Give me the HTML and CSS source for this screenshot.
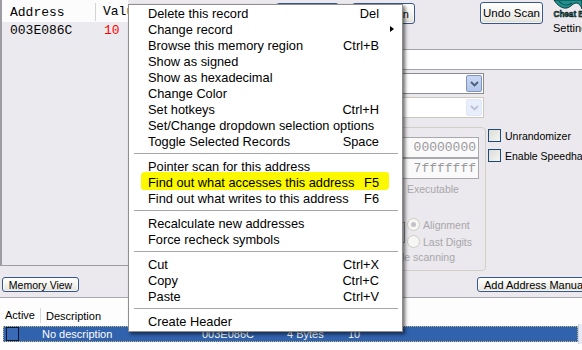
FILE: index.html
```html
<!DOCTYPE html>
<html>
<head>
<meta charset="utf-8">
<link rel="stylesheet" href="styles.css">
</head>
<body>
<div class="screen">
  <div class="top">
    <div class="addrlist">
      <div class="al-head"><span class="c-addr">Address</span><span class="c-val">Value</span></div>
      <div class="al-row"><span class="c-addr">003E086C</span><span class="c-val red">10</span></div>
    </div>
    <div class="controls">
      <div class="scanbar">
        <button class="btn scan1">First Scan</button>
        <button class="btn scan2">Next Scan</button>
        <button class="btn undo">Undo Scan</button>
        <div class="logo">
          <svg width="29" height="18" viewBox="0 0 29 18">
            <path d="M1 0 C4 5 9 9 14 8 C18 7 20 3 23 3 C26 3 28 6 29 9 L29 0 Z" fill="#1f9090" stroke="#062f2f" stroke-width="0.9"/>
            <path d="M6 1 C10 6 15 6 19 3" fill="none" stroke="#0b4d4d" stroke-width="1.1"/>
            <text x="0.5" y="17" font-family="Liberation Sans" font-size="8.5" font-weight="bold" fill="#177a7a" stroke="#000" stroke-width="0.5" textLength="52" lengthAdjust="spacingAndGlyphs">Cheat Engine</text>
          </svg>
          <span class="settings">Settings</span>
        </div>
      </div>
      <div class="valuebox"></div>
      <div class="combo"><span class="combo-btn"><svg width="9" height="6" viewBox="0 0 9 6"><path d="M1 1 L4.5 4.5 L8 1" fill="none" stroke="#4a5d80" stroke-width="1.8"/></svg></span></div>
      <div class="combo off"><span class="combo-btn"><svg width="9" height="6" viewBox="0 0 9 6"><path d="M1 1 L4.5 4.5 L8 1" fill="none" stroke="#b9c4d6" stroke-width="1.8"/></svg></span></div>
      <div class="lower">
        <div class="group">
          <div class="gb-input">00000000</div>
          <div class="gb-input second">7fffffff</div>
          <div class="gb-exec"><span class="chk dim"></span><span class="dimtext">Executable</span></div>
          <div class="gb-fast">
            <div class="fast-left"><span class="fast-edit"></span></div>
            <div class="radios">
              <div class="radio-row"><span class="radio on"></span><span class="dimtext">Alignment</span></div>
              <div class="radio-row"><span class="radio"></span><span class="dimtext">Last Digits</span></div>
            </div>
          </div>
          <div class="gb-pause dimtext">Pause the game while scanning</div>
        </div>
        <div class="checks">
          <div class="check-row"><span class="chk"></span><span>Unrandomizer</span></div>
          <div class="check-row"><span class="chk"></span><span>Enable Speedhack</span></div>
        </div>
      </div>
    </div>
  </div>
  <div class="midbar">
    <button class="btn memview">Memory View</button>
    <button class="btn addman">Add Address Manually</button>
  </div>
  <div class="table">
    <div class="t-head"><span class="h-active">Active</span><span class="h-desc">Description</span></div>
    <div class="t-body">
      <div class="t-row">
        <span class="row-chk"></span>
        <span class="r-desc">No description</span>
        <span class="r-addr">003E086C</span>
        <span class="r-type">4 Bytes</span>
        <span class="r-val">10</span>
      </div>
      <div class="vscroll"></div>
    </div>
  </div>

  <div class="menu">
    <div class="mi"><span>Delete this record</span><span class="sc">Del</span></div>
    <div class="mi"><span>Change record</span><span class="arrow"></span></div>
    <div class="mi"><span>Browse this memory region</span><span class="sc">Ctrl+B</span></div>
    <div class="mi"><span>Show as signed</span></div>
    <div class="mi"><span>Show as hexadecimal</span></div>
    <div class="mi"><span>Change Color</span></div>
    <div class="mi"><span>Set hotkeys</span><span class="sc">Ctrl+H</span></div>
    <div class="mi"><span>Set/Change dropdown selection options</span></div>
    <div class="mi"><span>Toggle Selected Records</span><span class="sc">Space</span></div>
    <div class="sep"></div>
    <div class="mi"><span>Pointer scan for this address</span></div>
    <div class="mi hl"><span>Find out what accesses this address</span><span class="sc">F5</span></div>
    <div class="mi"><span>Find out what writes to this address</span><span class="sc">F6</span></div>
    <div class="sep"></div>
    <div class="mi"><span>Recalculate new addresses</span></div>
    <div class="mi"><span>Force recheck symbols</span></div>
    <div class="sep"></div>
    <div class="mi"><span>Cut</span><span class="sc">Ctrl+X</span></div>
    <div class="mi"><span>Copy</span><span class="sc">Ctrl+C</span></div>
    <div class="mi"><span>Paste</span><span class="sc">Ctrl+V</span></div>
    <div class="sep"></div>
    <div class="mi"><span>Create Header</span></div>
  </div>
</div>
</body>
</html>
```
FILE: styles.css
```css
* { box-sizing: border-box; margin: 0; padding: 0; }
html, body { width: 582px; height: 350px; overflow: hidden; }
body {
  background: #ebe9ed;
  font-family: "Liberation Sans", Arial, sans-serif;
  font-size: 10.5px;
  color: #000;
}
.screen {
  position: relative;
  width: 582px;
  height: 350px;
  overflow: hidden;
  display: flex;
  flex-direction: column;
}

/* ---------- top area ---------- */
.top { display: flex; height: 272px; flex: none; }

.addrlist {
  width: 128px;
  height: 266px;
  flex: none;
  border-left: 2px solid #9d9ca2;
  border-bottom: 1px solid #9d9ca2;
  background: #ebeaef;
  font-family: "Liberation Mono", monospace;
  font-size: 13px;
  white-space: nowrap;
  overflow: hidden;
}
.al-head {
  height: 22px;
  background: #fcfcfd;
  display: flex;
  align-items: flex-end;
  padding-bottom: 1px;
}
.al-row { height: 16px; display: flex; align-items: center; }
.c-addr { width: 94px; flex: none; padding-left: 8px; }
.c-val { padding-left: 8px; }
.al-head .c-addr { border-right: 1px solid #d4d3d8; height: 18px; line-height: 19px; }
.al-head .c-val { padding-left: 7px; line-height: 19px; }
.red { color: #ff0000; }

.controls { flex: 1; min-width: 0; display: flex; flex-direction: column; }

.scanbar { height: 24px; display: flex; align-items: flex-start; flex: none; }
.btn {
  flex: none;
  font-family: "Liberation Sans", Arial, sans-serif;
  font-size: 11px;
  color: #000;
  border: 1px solid #37578a;
  border-radius: 3px;
  background: linear-gradient(#ffffff 0%, #f6f6f3 40%, #e9e8e2 85%, #d8d6cd 100%);
  box-shadow: inset 0 0 0 1px rgba(255,255,255,0.7);
  white-space: nowrap;
}
.scan1 { margin-left: 148px; margin-top: 3px; width: 63px; height: 21px; }
.scan2 { margin-left: 13px; margin-top: 3px; width: 63px; height: 21px; }
.undo { margin-left: 65px; margin-top: 2px; width: 63px; height: 22px; font-size: 11.5px; }
.logo { flex: none; margin-left: 10px; display: flex; flex-direction: column; }
.logo svg { display: block; }
.settings { font-size: 11px; margin-top: 4px; line-height: 13px; white-space: nowrap; }

.valuebox {
  margin-top: 25px;
  margin-left: 12px;
  height: 21px;
  background: #ffffff;
  border-top: 1px solid #a4a3a8;
  border-bottom: 1px solid #a4a3a8;
  flex: none;
}
.combo {
  margin-top: 3px;
  margin-left: 12px;
  width: 344px;
  height: 21px;
  flex: none;
  background: #fff;
  border: 1px solid #8d8c91;
  display: flex;
  justify-content: flex-end;
  align-items: stretch;
  padding: 1px;
}
.combo-btn {
  width: 16px;
  border: 1px solid #7f95bd;
  border-radius: 2px;
  background: linear-gradient(#c9d8f3, #b4c7ea);
  display: flex;
  align-items: center;
  justify-content: center;
}
.combo.off { border-color: #cbc9bd; }
.combo.off .combo-btn { border-color: #e0e7f6; background: #e8eefb; }

.lower { display: flex; margin-top: 9px; align-items: flex-start; }
.group {
  margin-left: 12px;
  width: 346px;
  height: 144px;
  border: 1px solid #d2d0c6;
  border-radius: 4px;
  display: flex;
  flex-direction: column;
  align-items: flex-end;
  padding-right: 6px;
  flex: none;
}
.gb-input {
  margin-top: 9px;
  width: 100px;
  height: 21px;
  border: 1px solid #a9a8ad;
  background: #fafafa;
  font-family: "Liberation Mono", monospace;
  font-size: 13px;
  color: #9a999e;
  text-align: right;
  padding-right: 2px;
  line-height: 19px;
}
.gb-input.second { margin-top: 0; }
.dimtext { color: #a8a7ab; white-space: nowrap; }
.gb-exec {
  align-self: flex-start;
  margin-left: 248px;
  margin-top: 3px;
  height: 13px;
  display: flex;
  align-items: center;
  gap: 5px;
  font-size: 10.5px;
}
.gb-fast {
  align-self: flex-start;
  margin-top: 23px;
  display: flex;
  gap: 2px;
}
.fast-left { width: 264px; padding-top: 4px; display: flex; justify-content: flex-end; }
.fast-edit { width: 40px; height: 21px; border: 1px solid #8e8d92; }
.radios { display: flex; flex-direction: column; gap: 4px; }
.radio-row { display: flex; align-items: center; gap: 3px; height: 13px; }
.radio {
  width: 13px; height: 13px;
  border: 1px solid #cfcdc2;
  border-radius: 50%;
  background: #f6f6f4;
  display: inline-flex; align-items: center; justify-content: center;
}
.radio.on::after { content: ""; width: 5px; height: 5px; border-radius: 50%; background: #c3c2c6; }
.gb-pause { margin-top: 3px; padding-right: 24px; line-height: 13px; }

.chk {
  width: 13px; height: 13px; flex: none;
  border: 1px solid #1e4a78;
  background: linear-gradient(135deg, #dcdcd8, #f4f4f2);
  display: inline-block;
}
.chk.dim { border-color: #c7c5ba; }
.checks { margin-left: 2px; padding-top: 2px; display: flex; flex-direction: column; gap: 7px; }
.check-row { display: flex; align-items: center; gap: 4px; height: 13px; white-space: nowrap; font-size: 10.5px; }

/* ---------- middle buttons ---------- */
.midbar { height: 26px; display: flex; align-items: flex-start; flex: none; border-bottom: 1px solid #a8a7ab; }
.memview { margin-left: 2px; margin-top: 5px; width: 77px; height: 15px; font-size: 10.5px; line-height: 12px; }
.addman { margin-left: auto; margin-right: -20px; margin-top: 5px; width: 125px; height: 15px; font-size: 11px; line-height: 12px; text-align: left; padding-left: 6px; }

/* ---------- bottom table ---------- */
.table { flex: 1; background: #fdfdfd; padding-top: 7px; font-size: 11px; display: flex; flex-direction: column; }
.t-head { height: 21px; display: flex; align-items: center; flex: none; }
.h-active { width: 41px; padding-left: 5px; border-right: 1px solid #d8d8dc; line-height: 15px; }
.h-desc { padding-left: 5px; }
.t-body { display: flex; align-items: flex-start; }
.t-row {
  margin-left: 3px;
  width: 575px;
  height: 16px;
  flex: none;
  background: #3162ae;
  border: 1px dotted #c8b878;
  color: #fff;
  display: flex;
  align-items: center;
  white-space: nowrap;
}
.vscroll { flex: 1; height: 20px; margin-top: -2px; background: #e4e9f4; border-left: 1px solid #c9d2e6; }
.row-chk { width: 13px; height: 14px; margin-left: 2px; border: 1px solid #0a1730; background: #3a6ab6; flex: none; }
.r-desc { margin-left: 23px; width: 160px; }
.r-addr { width: 85px; }
.r-type { width: 61px; }

/* ---------- context menu ---------- */
.menu {
  position: absolute;
  left: 128px;
  top: 4px;
  width: 275px;
  background: #ffffff;
  border: 1px solid #8e8e8e;
  padding-bottom: 2px;
  box-shadow: 2px 2px 3px rgba(0,0,0,0.45), 3px 3px 4px rgba(0,0,0,0.15);
  font-size: 12.8px;
  z-index: 10;
}
.mi {
  position: relative;
  height: 16px;
  line-height: 17px;
  padding-left: 19px;
  padding-right: 23px;
  display: flex;
  justify-content: space-between;
  white-space: nowrap;
}
.mi.hl::before {
  content: "";
  position: absolute;
  left: 12px;
  top: -2px;
  width: 248px;
  height: 18px;
  background: #fbf800;
  border-radius: 4px 3px 4px 3px;
  z-index: -1;
}
.mi.hl { z-index: 0; }
.arrow {
  position: absolute;
  right: 8px;
  top: 5px;
  width: 0; height: 0;
  border-left: 4px solid #000;
  border-top: 3.5px solid transparent;
  border-bottom: 3.5px solid transparent;
}
.sep { height: 1px; margin: 4px 4px 4px 5px; background: #a6a6a6; }
```
